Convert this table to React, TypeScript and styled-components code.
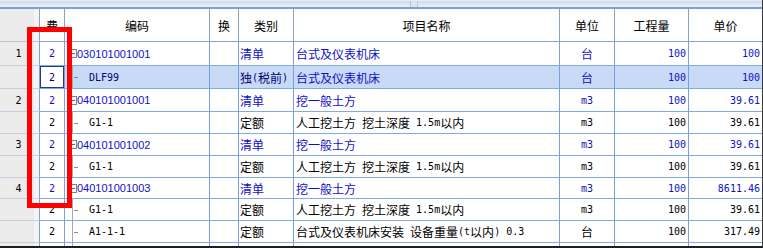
import React from 'react';
import styled, { createGlobalStyle, css } from 'styled-components';

type Tone = 'blue' | 'black' | 'navy';
type Node = 'parent' | 'child';

interface RowData {
  num?: string;
  fee: string;
  feeTone: Tone;
  code: string;
  node: Node;
  codeTone: Tone;
  type: string;
  typeTone: Tone;
  name: string;
  unit: string;
  qty: string;
  price: string;
  tone: Tone;
  height: number;
  selected?: boolean;
}

const COLS = '40px 25px 145px 29px 55px 266px 55px 74px 73px';

const TONES: Record<Tone, string> = {
  blue: '#0f10c8',
  black: '#000000',
  navy: '#00007a',
};

const HEADERS = ['', '费', '编码', '换', '类别', '项目名称', '单位', '工程量', '单价'];

const bill = (num: string, code: string, name: string, unit: string, price: string, height: number): RowData => ({
  num, fee: '2', feeTone: 'blue', code, node: 'parent', codeTone: 'blue',
  type: '清单', typeTone: 'blue', name, unit, qty: '100', price, tone: 'blue', height,
});

const quota = (code: string, name: string, unit: string, price: string, height: number): RowData => ({
  fee: '2', feeTone: 'black', code, node: 'child', codeTone: 'black',
  type: '定额', typeTone: 'black', name, unit, qty: '100', price, tone: 'black', height,
});

const ROWS: RowData[] = [
  bill('1', '030101001001', '台式及仪表机床', '台', '100', 24),
  {
    fee: '2', feeTone: 'navy', code: 'DLF99', node: 'child', codeTone: 'navy',
    type: '独(税前)', typeTone: 'navy', name: '台式及仪表机床', unit: '台',
    qty: '100', price: '100', tone: 'blue', height: 23, selected: true,
  },
  bill('2', '040101001001', '挖一般土方', 'm3', '39.61', 23),
  quota('G1-1', '人工挖土方 挖土深度 1.5m以内', 'm3', '39.61', 22),
  bill('3', '040101001002', '挖一般土方', 'm3', '39.61', 22),
  quota('G1-1', '人工挖土方 挖土深度 1.5m以内', 'm3', '39.61', 22),
  bill('4', '040101001003', '挖一般土方', 'm3', '8611.46', 21),
  quota('G1-1', '人工挖土方 挖土深度 1.5m以内', 'm3', '39.61', 22),
  quota('A1-1-1', '台式及仪表机床安装 设备重量(t以内) 0.3', '台', '317.49', 22),
  {
    fee: '', feeTone: 'black', code: '', node: 'child', codeTone: 'black',
    type: '', typeTone: 'black', name: '', unit: '', qty: '', price: '', tone: 'black', height: 22,
  },
];

// Latin runs are drawn half-width, the way the original grid font does it
const Mixed = ({ text }: { text: string }) => (
  <>
    {text.split(/([\u0000-\u00ff]+)/).filter(Boolean).map((part, i) =>
      /^[\u0000-\u00ff]+$/.test(part) ? <Half key={i}>{part}</Half> : <span key={i}>{part}</span>
    )}
  </>
);

const App = () => {
  return (
    <>
      <GlobalStyle />
      <Frame>
        <TopBar>
          <Grip />
        </TopBar>
        <HeaderRow>
          {HEADERS.map((h, i) =>
            i === 0 ? <NumHead key={i} /> : <HeadCell key={i}>{h}</HeadCell>
          )}
        </HeaderRow>
        {ROWS.map((row, i) => (
          <Row key={i} $height={row.height} $selected={row.selected}>
            <NumCell>{row.num}</NumCell>
            <FeeCell $tone={row.feeTone} $focused={row.selected}>{row.fee}</FeeCell>
            <CodeCell $node={row.node}>
              {row.node === 'parent' ? (
                <>
                  <Toggle />
                  <CodeText $tone={row.codeTone}>{row.code}</CodeText>
                </>
              ) : (
                <>
                  <Branch $empty={!row.code} />
                  <Half style={{ color: TONES[row.codeTone] }}>{row.code}</Half>
                </>
              )}
            </CodeCell>
            <Cell />
            <Cell $tone={row.typeTone}><Mixed text={row.type} /></Cell>
            <Cell $tone={row.tone} $pad={2}><Mixed text={row.name} /></Cell>
            <Cell $tone={row.tone} $align="center"><Mixed text={row.unit} /></Cell>
            <Cell $tone={row.tone} $align="right"><Half>{row.qty}</Half></Cell>
            <Cell $tone={row.tone} $align="right"><Half>{row.price}</Half></Cell>
          </Row>
        ))}
        <Marker />
      </Frame>
    </>
  );
};

export default App;

const GlobalStyle = createGlobalStyle`
  html, body {
    margin: 0;
    padding: 0;
    background: #ffffff;
  }
  body {
    font-family: "Noto Sans CJK SC", "DejaVu Sans", sans-serif;
    font-size: 12px;
  }
`;

const Frame = styled.div`
  position: relative;
  width: 763px;
  height: 248px;
  box-sizing: border-box;
  overflow: hidden;
  border-right: 1px solid #3a3a3a;
  border-bottom: 2px solid #1e1e1e;
  background: #ffffff;
`;

const TopBar = styled.div`
  position: relative;
  height: 9px;
  box-sizing: border-box;
  background: linear-gradient(#cfdbed, #e9f0f9);
  border-top: 1px solid #e4ebf5;
  border-bottom: 2px solid #7f9fd0;
`;

const Grip = styled.div`
  position: absolute;
  left: 410px;
  top: 0;
  width: 6px;
  height: 6px;
  background: #dde5f0;
  border-left: 1px solid #b5c4da;
  border-right: 1px solid #b5c4da;
`;

const HeaderRow = styled.div`
  display: grid;
  grid-template-columns: ${COLS};
  height: 33px;
`;

const gridCell = css`
  box-sizing: border-box;
  display: flex;
  align-items: center;
  min-width: 0;
  overflow: hidden;
  white-space: nowrap;
  border-right: 1px solid #76a1da;
  border-bottom: 1px solid #83abdf;

  &:last-child {
    border-right: none;
  }
`;

const numBg = css`
  background: linear-gradient(to right, #ebebeb 0, #ebebeb 34px, #f4f4f4 34px);
`;

const HeadCell = styled.div`
  ${gridCell};
  justify-content: center;
  border-right-color: #8ba2c2;
  border-bottom-color: #7ea4d8;
  color: #000000;
  font-size: 12px;
`;

const NumHead = styled.div`
  ${gridCell};
  ${numBg};
  border-right-color: #8ba2c2;
  border-bottom-color: #b7c6da;
`;

const Row = styled.div<{ $height: number; $selected?: boolean }>`
  display: grid;
  grid-template-columns: ${COLS};
  height: ${(p) => p.$height}px;
  background: ${(p) => (p.$selected ? '#c8daf6' : '#ffffff')};
`;

const Cell = styled.div<{ $tone?: Tone; $align?: 'left' | 'center' | 'right'; $pad?: number }>`
  ${gridCell};
  color: ${(p) => TONES[p.$tone || 'black']};
  justify-content: ${(p) =>
    p.$align === 'center' ? 'center' : p.$align === 'right' ? 'flex-end' : 'flex-start'};
  padding: 0 ${(p) => (p.$align === 'right' ? 2 : 0)}px 0 ${(p) => (p.$align ? 0 : p.$pad ?? 1)}px;
`;

const NumCell = styled.div`
  ${gridCell};
  ${numBg};
  justify-content: center;
  padding-right: 2px;
  border-bottom-color: #c3cfdf;
  color: #000000;
  font-family: "DejaVu Sans Mono", monospace;
  font-size: 10px;
`;

const FeeCell = styled.div<{ $tone: Tone; $focused?: boolean }>`
  ${gridCell};
  justify-content: center;
  color: ${(p) => TONES[p.$tone]};
  font-family: "DejaVu Sans Mono", monospace;
  font-size: 10px;
  ${(p) =>
    p.$focused &&
    css`
      background: #ffffff;
      box-shadow: inset 0 0 0 1px #1d3a8a;
    `}
`;

const CodeCell = styled.div<{ $node: Node }>`
  ${gridCell};
  padding-left: ${(p) => (p.$node === 'parent' ? 3 : 0)}px;
`;

const Toggle = styled.span`
  position: relative;
  flex: none;
  width: 9px;
  height: 9px;
  box-sizing: border-box;
  border: 1px solid #8a8278;
  background: #f6f6f6;

  &::after {
    content: '';
    position: absolute;
    left: 1px;
    top: 3px;
    width: 5px;
    height: 1px;
    background: #6a6a6a;
  }
`;

const CodeText = styled.span<{ $tone: Tone }>`
  color: ${(p) => TONES[p.$tone]};
  font-family: "Liberation Sans", Arial, sans-serif;
  font-size: 11px;
`;

const Branch = styled.span<{ $empty?: boolean }>`
  position: relative;
  flex: none;
  align-self: stretch;
  width: 24px;

  &::before {
    content: '';
    position: absolute;
    left: 7px;
    top: 0;
    bottom: 0;
    width: 1px;
    background: #a8a8a8;
  }

  &::after {
    content: '';
    display: ${(p) => (p.$empty ? 'none' : 'block')};
    position: absolute;
    left: 9px;
    top: 50%;
    width: 4px;
    height: 1px;
    background: #8a8a8a;
  }
`;

const Half = styled.span`
  font-family: "DejaVu Sans Mono", monospace;
  font-size: 10px;
  white-space: pre;
`;

const Marker = styled.div`
  position: absolute;
  left: 27px;
  top: 27px;
  width: 45px;
  height: 181px;
  box-sizing: border-box;
  border: 5px solid #ff0000;
  pointer-events: none;
`;
